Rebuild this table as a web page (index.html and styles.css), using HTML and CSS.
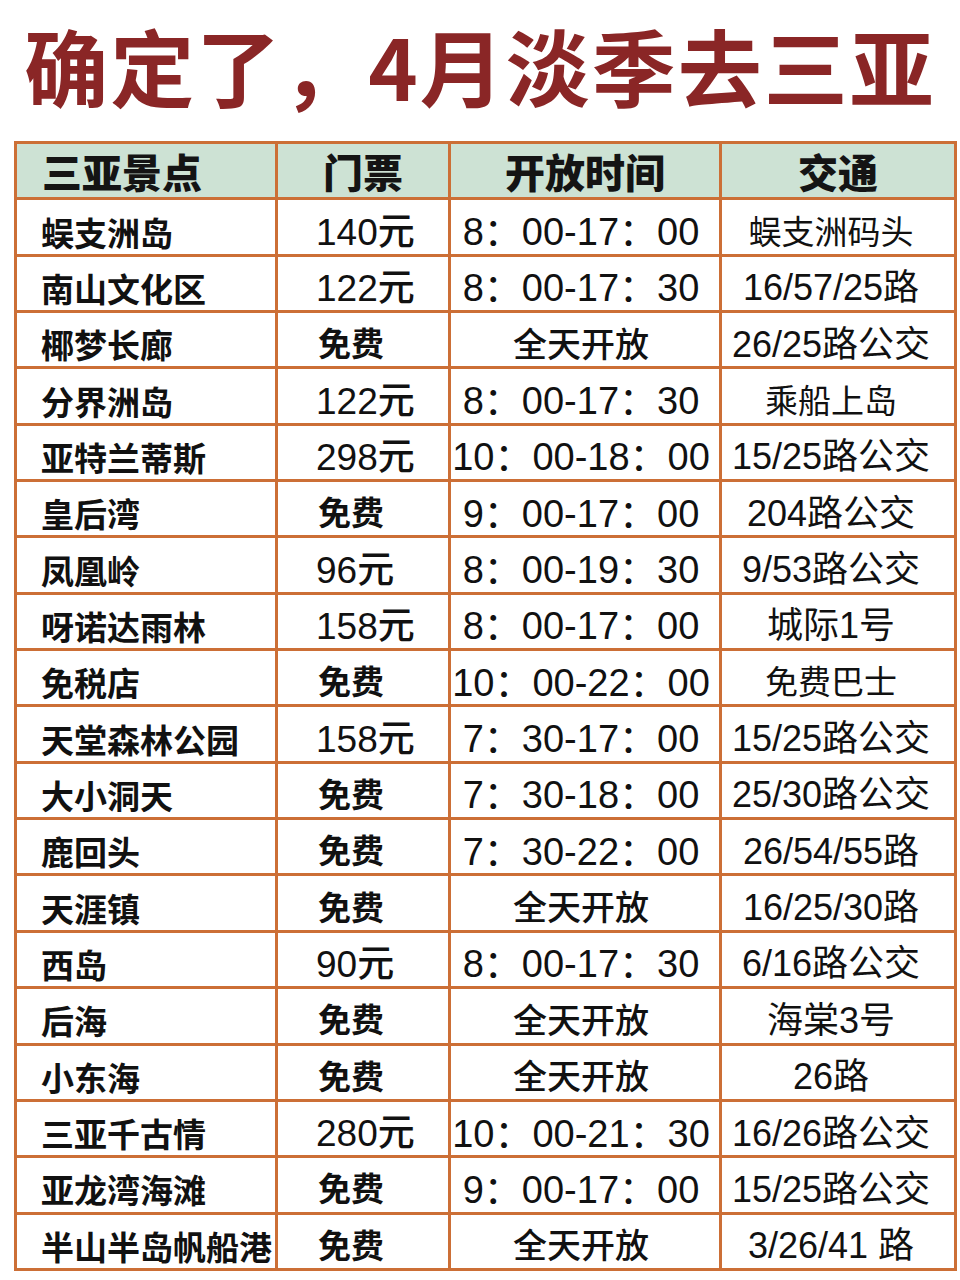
FILE: index.html
```html
<!DOCTYPE html>
<html lang="zh-CN">
<head>
<meta charset="utf-8">
<title>确定了，4月淡季去三亚</title>
<link rel="stylesheet" href="styles.css">
</head>
<body>
<h1 class="title">确定了，4月淡季去三亚</h1>
<table class="grid">
  <colgroup>
    <col class="c-name"><col class="c-price"><col class="c-time"><col class="c-bus">
  </colgroup>
  <thead>
    <tr><th class="name">三亚景点</th><th>门票</th><th>开放时间</th><th>交通</th></tr>
  </thead>
  <tbody>
    <tr><td class="name">蜈支洲岛</td><td class="price">140元</td><td class="time">8：00-17：00</td><td class="bus cjk">蜈支洲码头</td></tr>
    <tr><td class="name">南山文化区</td><td class="price">122元</td><td class="time">8：00-17：30</td><td class="bus">16/57/25路</td></tr>
    <tr><td class="name">椰梦长廊</td><td class="price free">免费</td><td class="time allday">全天开放</td><td class="bus">26/25路公交</td></tr>
    <tr><td class="name">分界洲岛</td><td class="price">122元</td><td class="time">8：00-17：30</td><td class="bus cjk">乘船上岛</td></tr>
    <tr><td class="name">亚特兰蒂斯</td><td class="price">298元</td><td class="time">10：00-18：00</td><td class="bus">15/25路公交</td></tr>
    <tr><td class="name">皇后湾</td><td class="price free">免费</td><td class="time">9：00-17：00</td><td class="bus">204路公交</td></tr>
    <tr><td class="name">凤凰岭</td><td class="price">96元</td><td class="time">8：00-19：30</td><td class="bus">9/53路公交</td></tr>
    <tr><td class="name">呀诺达雨林</td><td class="price">158元</td><td class="time">8：00-17：00</td><td class="bus">城际1号</td></tr>
    <tr><td class="name">免税店</td><td class="price free">免费</td><td class="time">10：00-22：00</td><td class="bus cjk">免费巴士</td></tr>
    <tr><td class="name">天堂森林公园</td><td class="price">158元</td><td class="time">7：30-17：00</td><td class="bus">15/25路公交</td></tr>
    <tr><td class="name">大小洞天</td><td class="price free">免费</td><td class="time">7：30-18：00</td><td class="bus">25/30路公交</td></tr>
    <tr><td class="name">鹿回头</td><td class="price free">免费</td><td class="time">7：30-22：00</td><td class="bus">26/54/55路</td></tr>
    <tr><td class="name">天涯镇</td><td class="price free">免费</td><td class="time allday">全天开放</td><td class="bus">16/25/30路</td></tr>
    <tr><td class="name">西岛</td><td class="price">90元</td><td class="time">8：00-17：30</td><td class="bus">6/16路公交</td></tr>
    <tr><td class="name">后海</td><td class="price free">免费</td><td class="time allday">全天开放</td><td class="bus">海棠3号</td></tr>
    <tr><td class="name">小东海</td><td class="price free">免费</td><td class="time allday">全天开放</td><td class="bus">26路</td></tr>
    <tr><td class="name">三亚千古情</td><td class="price">280元</td><td class="time">10：00-21：30</td><td class="bus">16/26路公交</td></tr>
    <tr><td class="name">亚龙湾海滩</td><td class="price free">免费</td><td class="time">9：00-17：00</td><td class="bus">15/25路公交</td></tr>
    <tr><td class="name">半山半岛帆船港</td><td class="price free">免费</td><td class="time allday">全天开放</td><td class="bus">3/26/41 路</td></tr>
  </tbody>
</table>
</body>
</html>
```

FILE: styles.css
```css
html, body {
  margin: 0;
  padding: 0;
  background: #ffffff;
}

body {
  width: 960px;
  height: 1280px;
  overflow: hidden;
  font-family: "Liberation Sans", "Noto Sans CJK SC", sans-serif;
  color: #111111;
}

.title {
  margin: 0;
  height: 141px;
  box-sizing: border-box;
  padding-bottom: 12px;
  line-height: 129px;
  text-align: center;
  font-family: "Noto Sans CJK SC", sans-serif;
  font-size: 84px;
  font-weight: 700;
  color: #8a2626;
  letter-spacing: 2px;
}

.grid {
  margin-left: 14px;
  border-collapse: collapse;
  table-layout: fixed;
  width: 940px;
}

.c-name { width: 261px; }
.c-price { width: 173px; }
.c-time { width: 271px; }
.c-bus { width: 235px; }

.grid th,
.grid td {
  border: 3px solid #cc6f36;
  height: 56.35px;
  box-sizing: border-box;
  white-space: nowrap;
  overflow: visible;
  vertical-align: middle;
}

.grid th {
  background: #cde2d4;
  font-family: "Noto Sans CJK SC", sans-serif;
  font-size: 40px;
  font-weight: 900;
  text-align: center;
  padding: 0;
  line-height: 1;
  color: #141414;
}

.grid th.name {
  text-align: left;
  padding-left: 25px;
}

.grid td {
  font-size: 34px;
  line-height: 1;
  padding: 10px 0 0 0;
}

.grid td.name {
  font-family: "Noto Sans CJK SC", sans-serif;
  font-size: 33px;
  font-weight: 700;
  padding-left: 24px;
  text-align: left;
}

.grid td.price {
  font-size: 37px;
  font-weight: 500;
  text-align: left;
  padding-left: 38px;
}

.grid td.price.free {
  font-size: 33px;
  font-weight: 700;
  padding-left: 40px;
}

.grid td.time {
  font-size: 38px;
  font-weight: 400;
  text-align: center;
  padding-right: 8px;
}

.grid td.time.allday {
  font-size: 34px;
  font-weight: 500;
}

.grid td.bus {
  font-size: 36px;
  font-weight: 400;
  text-align: center;
  padding-right: 14px;
}

.grid td.bus.cjk {
  font-size: 33px;
}
```
